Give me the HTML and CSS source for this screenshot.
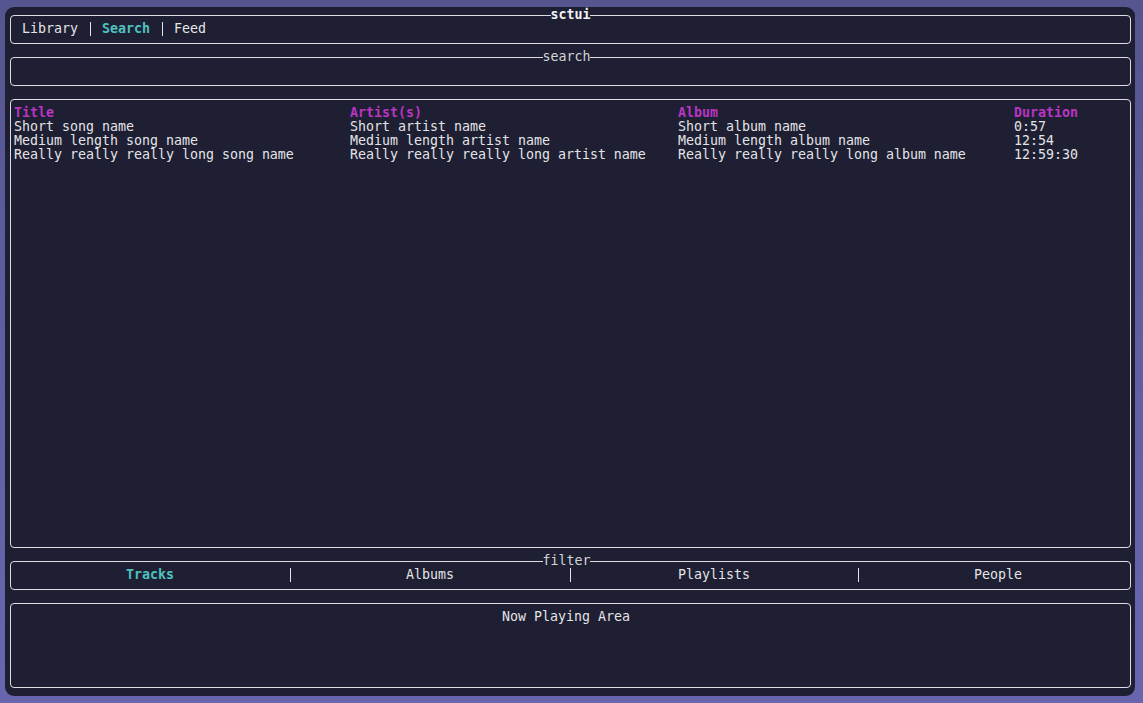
FILE: index.html
```html
<!DOCTYPE html>
<html lang="en">
<head>
<meta charset="utf-8">
<title>sctui</title>
<link rel="stylesheet" href="styles.css">
</head>
<body>
<div class="term">
  <div class="box box-nav">
    <span class="box-title title-odd bold">sctui</span>
    <div class="row nav"><span class="tab">Library</span> <span class="vsep"></span> <span class="tab active">Search</span> <span class="vsep"></span> <span class="tab">Feed</span></div>
  </div>
  <div class="box box-search">
    <span class="box-title title-even dim">search</span>
    <div class="row"></div>
  </div>
  <div class="box box-table">
    <div class="table">
      <div class="th">Title</div><div class="th">Artist(s)</div><div class="th">Album</div><div class="th">Duration</div>
      <div>Short song name</div><div>Short artist name</div><div>Short album name</div><div>0:57</div>
      <div>Medium length song name</div><div>Medium length artist name</div><div>Medium length album name</div><div>12:54</div>
      <div>Really really really long song name</div><div>Really really really long artist name</div><div>Really really really long album name</div><div>12:59:30</div>
    </div>
  </div>
  <div class="box box-filter">
    <span class="box-title title-even dim">filter</span>
    <div class="filters">
      <div class="filter active">Tracks</div><div class="sep"><span class="vsep"></span></div>
      <div class="filter">Albums</div><div class="sep"><span class="vsep"></span></div>
      <div class="filter">Playlists</div><div class="sep"><span class="vsep"></span></div>
      <div class="filter">People</div>
    </div>
  </div>
  <div class="box box-player">
    <div class="row player-title">Now Playing Area</div>
  </div>
</div>
</body>
</html>
```
FILE: styles.css
```css
html, body {
  margin: 0;
  padding: 0;
}
body {
  width: 1143px;
  height: 703px;
  background: linear-gradient(180deg, #55558f 0%, #615ea2 50%, #6a66ae 100%);
  overflow: hidden;
  font-family: "DejaVu Sans Mono", "Liberation Mono", monospace;
  font-size: 13.29px;
  line-height: 14px;
  color: #e4e4e6;
}
.term {
  margin: 7px 8px 0 5px;
  width: 1130px;
  height: 689px;
  box-sizing: border-box;
  background: #1e1f33;
  border-radius: 9px;
  padding: 8px 4px 0 5px;
  display: flex;
  flex-direction: column;
  gap: 13px;
}
.box {
  position: relative;
  border: 1px solid #dedee2;
  border-radius: 4px;
  box-sizing: border-box;
  padding: 6px 0 0 3px;
  flex: none;
}
.box-nav, .box-search, .box-filter { height: 29px; }
.box-table { height: 449px; }
.box-player { height: 85px; }
.box-title {
  position: absolute;
  top: -8px;
  left: 50%;
  background: #1e1f33;
  line-height: 14px;
  white-space: pre;
}
.title-odd { margin-left: -20px; }
.title-even { margin-left: -28px; }
.bold { font-weight: bold; color: #f2f2f4; }
.dim { color: #d4d4d8; }
.row {
  height: 14px;
  white-space: pre;
}
.nav { padding-left: 8px; }
.tab.active { color: #4fc1c0; font-weight: bold; }
.vsep {
  display: inline-block;
  width: 5px;
  height: 14px;
  margin-right: 3px;
  border-right: 1px solid #e4e4e6;
  box-sizing: border-box;
  vertical-align: top;
}
.table {
  display: grid;
  grid-template-columns: 336px 328px 336px 1fr;
  grid-auto-rows: 14px;
  white-space: pre;
}
.th { color: #b935c2; font-weight: bold; }
.filters {
  display: grid;
  grid-template-columns: 272px 8px 272px 8px 280px 8px 272px;
  grid-auto-rows: 14px;
  white-space: pre;
}
.filter { text-align: center; }
.filter.active { color: #4fc1c0; font-weight: bold; }
.sep { display: flex; }
.player-title {
  text-align: center;
  padding-right: 12px;
}
```
